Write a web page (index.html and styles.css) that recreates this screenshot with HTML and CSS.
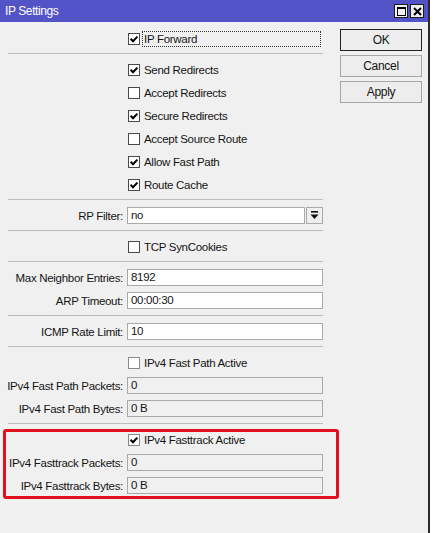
FILE: index.html
```html
<!DOCTYPE html>
<html lang="en">
<head>
    <meta charset="UTF-8">
    <title>IP Settings</title>
    <link rel="stylesheet" href="styles.css">
</head>
<body>
    <div class="window">
        <div class="titlebar">
            <span class="title">IP Settings</span>
            <div class="title-buttons">
                <span class="tb-btn">
                    <svg width="11" height="11" viewBox="0 0 11 11"><rect x="1.5" y="1.5" width="8" height="8" fill="none" stroke="#000" stroke-width="1"/><rect x="1" y="1" width="9" height="2" fill="#000"/></svg>
                </span>
                <span class="tb-btn">
                    <svg width="11" height="11" viewBox="0 0 11 11"><path d="M2 2l7 7M9 2l-7 7" stroke="#000" stroke-width="2"/></svg>
                </span>
            </div>
        </div>

        <div class="content">
            <div class="form">
                <div class="row">
                    <span></span>
                    <label class="check focused"><span class="box on"></span><span class="check-text">IP Forward</span></label>
                </div>
                <div class="sep"></div>

                <div class="row"><span></span><label class="check"><span class="box on"></span>Send Redirects</label></div>
                <div class="row"><span></span><label class="check"><span class="box"></span>Accept Redirects</label></div>
                <div class="row"><span></span><label class="check"><span class="box on"></span>Secure Redirects</label></div>
                <div class="row"><span></span><label class="check"><span class="box"></span>Accept Source Route</label></div>
                <div class="row"><span></span><label class="check"><span class="box on"></span>Allow Fast Path</label></div>
                <div class="row"><span></span><label class="check"><span class="box on"></span>Route Cache</label></div>
                <div class="sep"></div>

                <div class="row">
                    <span class="label">RP Filter:</span>
                    <div class="combo">
                        <span class="field">no</span>
                        <span class="drop">
                            <svg width="9" height="9" viewBox="0 0 9 9"><rect x="1" y="0" width="7" height="1.6" fill="#111"/><path d="M0.5 3.5h8l-4 4.5z" fill="#111"/></svg>
                        </span>
                    </div>
                </div>
                <div class="sep"></div>

                <div class="row"><span></span><label class="check"><span class="box"></span>TCP SynCookies</label></div>
                <div class="sep"></div>

                <div class="row"><span class="label">Max Neighbor Entries:</span><span class="field">8192</span></div>
                <div class="row"><span class="label">ARP Timeout:</span><span class="field">00:00:30</span></div>
                <div class="sep"></div>

                <div class="row"><span class="label">ICMP Rate Limit:</span><span class="field">10</span></div>
                <div class="sep"></div>

                <div class="row"><span></span><label class="check disabled"><span class="box"></span>IPv4 Fast Path Active</label></div>
                <div class="row"><span class="label">IPv4 Fast Path Packets:</span><span class="field readonly">0</span></div>
                <div class="row"><span class="label">IPv4 Fast Path Bytes:</span><span class="field readonly">0 B</span></div>
                <div class="sep"></div>

                <div class="group marked">
                    <div class="row"><span></span><label class="check disabled"><span class="box on"></span>IPv4 Fasttrack Active</label></div>
                    <div class="row"><span class="label">IPv4 Fasttrack Packets:</span><span class="field readonly">0</span></div>
                    <div class="row"><span class="label">IPv4 Fasttrack Bytes:</span><span class="field readonly">0 B</span></div>
                </div>
            </div>

            <div class="actions">
                <button class="btn btn-default">OK</button>
                <button class="btn">Cancel</button>
                <button class="btn">Apply</button>
            </div>
        </div>
    </div>
</body>
</html>
```

FILE: styles.css
```css
* {
    margin: 0;
    padding: 0;
    box-sizing: border-box;
}

body {
    font-family: "Liberation Sans", Arial, sans-serif;
    font-size: 11.5px;
    letter-spacing: -0.3px;
    color: #141414;
    background: #fff;
}

.window {
    width: 430px;
    min-height: 100vh;
    background: #f0f0f0;
    border-right: 2px solid #2a2a2a;
}

/* title bar */
.titlebar {
    height: 22px;
    background: #5353c8;
    display: flex;
    align-items: center;
    justify-content: space-between;
    padding: 0 4px 0 5px;
}

.title {
    color: #fff;
    font-size: 12px;
    letter-spacing: -0.4px;
}

.title-buttons {
    display: flex;
    gap: 2px;
}

.tb-btn {
    width: 14px;
    height: 14px;
    background: #f0f0f0;
    border: 1px solid #1c1c1c;
    display: flex;
    align-items: center;
    justify-content: center;
}

/* body */
.content {
    display: flex;
}

.form {
    width: 330px;
    padding-top: 5px;
}

.row {
    display: grid;
    grid-template-columns: 123px 196px;
    column-gap: 4px;
    height: 23px;
    align-items: center;
}

.label {
    text-align: right;
    white-space: nowrap;
}

.sep {
    height: 1px;
    margin: 3px 7px 4px 8px;
    background: #bdbdbd;
}

.check {
    display: flex;
    align-items: center;
    gap: 4px;
    margin-left: 1px;
    white-space: nowrap;
}

.box {
    width: 12px;
    height: 12px;
    background: #fff;
    border: 1px solid #4a4a4a;
    flex-shrink: 0;
}

.box.on {
    background: #fff url("data:image/svg+xml,%3Csvg xmlns='http://www.w3.org/2000/svg' width='10' height='10' viewBox='0 0 10 10'%3E%3Cpath d='M1.6 4.8l2.4 2.4 4.4-4.6' fill='none' stroke='%23000' stroke-width='2'/%3E%3C/svg%3E") center no-repeat;
}

.disabled .box {
    border-color: #8a8a8a;
}

.focused {
    flex: 1;
    margin-right: 2px;
}

.focused .check-text {
    flex: 1;
    border: 1px dotted #333;
    padding: 1px 1px;
    margin-left: -2px;
}

.field {
    height: 17px;
    background: #fff;
    border: 1px solid #a9a9a9;
    padding: 0 3px;
    line-height: 15px;
    white-space: nowrap;
}

.field.readonly {
    background: #f0f0f0;
}

.combo {
    display: flex;
    gap: 1px;
}

.combo .field {
    flex: 1;
}

.drop {
    width: 17px;
    height: 17px;
    border: 1px solid #a9a9a9;
    background: #f0f0f0;
    display: flex;
    align-items: center;
    justify-content: center;
}

/* red marker around the fasttrack block */
.group {
    position: relative;
}

.marked::after {
    content: "";
    position: absolute;
    top: 1px;
    bottom: -2px;
    left: 3px;
    right: -9px;
    border: 3px solid #e2101c;
    border-radius: 3px;
}

/* buttons on the right */
.actions {
    width: 82px;
    margin-left: 10px;
    padding-top: 7px;
    display: flex;
    flex-direction: column;
    gap: 4px;
}

.btn {
    height: 22px;
    font-family: inherit;
    font-size: 12px;
    letter-spacing: -0.3px;
    color: #141414;
    background: #ededed;
    border: 1px solid #a6a6a6;
}

.btn-default {
    border-color: #222;
}
```
